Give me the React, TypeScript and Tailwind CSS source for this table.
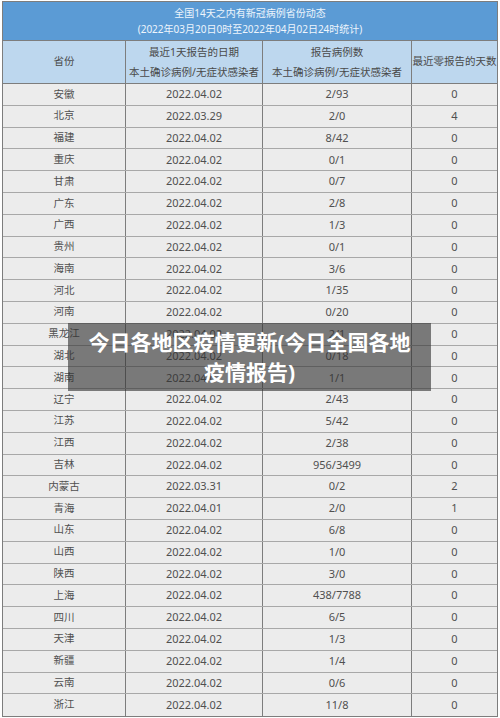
import React from "react";

const rows: [string, string, string, string][] = [
  ["安徽", "2022.04.02", "2/93", "0"],
  ["北京", "2022.03.29", "2/0", "4"],
  ["福建", "2022.04.02", "8/42", "0"],
  ["重庆", "2022.04.02", "0/1", "0"],
  ["甘肃", "2022.04.02", "0/7", "0"],
  ["广东", "2022.04.02", "2/8", "0"],
  ["广西", "2022.04.02", "1/3", "0"],
  ["贵州", "2022.04.02", "0/1", "0"],
  ["海南", "2022.04.02", "3/6", "0"],
  ["河北", "2022.04.02", "1/35", "0"],
  ["河南", "2022.04.02", "0/20", "0"],
  ["黑龙江", "2022.04.02", "2/1", "0"],
  ["湖北", "2022.04.02", "0/18", "0"],
  ["湖南", "2022.04.02", "1/1", "0"],
  ["辽宁", "2022.04.02", "2/43", "0"],
  ["江苏", "2022.04.02", "5/42", "0"],
  ["江西", "2022.04.02", "2/38", "0"],
  ["吉林", "2022.04.02", "956/3499", "0"],
  ["内蒙古", "2022.03.31", "0/2", "2"],
  ["青海", "2022.04.01", "2/0", "1"],
  ["山东", "2022.04.02", "6/8", "0"],
  ["山西", "2022.04.02", "1/0", "0"],
  ["陕西", "2022.04.02", "3/0", "0"],
  ["上海", "2022.04.02", "438/7788", "0"],
  ["四川", "2022.04.02", "6/5", "0"],
  ["天津", "2022.04.02", "1/3", "0"],
  ["新疆", "2022.04.02", "1/4", "0"],
  ["云南", "2022.04.02", "0/6", "0"],
  ["浙江", "2022.04.02", "11/8", "0"],
];

const font = { fontFamily: '"Noto Sans", "Noto Sans CJK SC", sans-serif' };

export default function App() {
  return (
    <div className="relative w-[500px] h-[718px] bg-white overflow-hidden" style={font}>
      <div className="mx-[2px] mt-[1px] border border-[#7d7d7d]">
        {/* title band */}
        <div className="h-[39px] bg-[#5b9bd5] flex flex-col items-center justify-center text-[#eef5fc] text-[10px] leading-[16px] border-b border-[#7d7d7d]">
          <div>全国14天之内有新冠病例省份动态</div>
          <div>(2022年03月20日0时至2022年04月02日24时统计)</div>
        </div>
        {/* column header */}
        <div className="grid grid-cols-[123px_137px_149px_85px] h-[43px] bg-[#bdd7ee] text-[#4a4a4a] text-[10.5px] border-b border-[#7d7d7d]">
          <div className="flex items-center justify-center border-r border-[#7d7d7d]">省份</div>
          <div className="flex flex-col items-center justify-center leading-[20px] border-r border-[#7d7d7d]">
            <div>最近1天报告的日期</div>
            <div>本土确诊病例/无症状感染者</div>
          </div>
          <div className="flex flex-col items-center justify-center leading-[20px] border-r border-[#7d7d7d]">
            <div>报告病例数</div>
            <div>本土确诊病例/无症状感染者</div>
          </div>
          <div className="flex items-center justify-center">最近零报告的天数</div>
        </div>
        {/* body */}
        <div className="bg-[#ececec] text-[#505050] text-[11px]">
          {rows.map((r, i) => (
            <div
              key={r[0]}
              className={
                "grid grid-cols-[123px_137px_149px_85px] h-[21.8px] " +
                (i < rows.length - 1 ? "border-b border-[#a8a8a8]" : "")
              }
            >
              <div className="flex items-center justify-center border-r border-[#7d7d7d] text-[10.5px]">{r[0]}</div>
              <div className="flex items-center justify-center border-r border-[#7d7d7d]">{r[1]}</div>
              <div className="flex items-center justify-center border-r border-[#7d7d7d]">{r[2]}</div>
              <div className="flex items-center justify-center">{r[3]}</div>
            </div>
          ))}
        </div>
      </div>

      {/* overlay caption */}
      <div className="absolute left-[68px] top-[323px] w-[363px] h-[68px] bg-[rgba(50,50,50,0.62)] flex flex-col items-center justify-center text-white font-bold text-[21px] leading-[30px]">
        <div>今日各地区疫情更新(今日全国各地</div>
        <div>疫情报告)</div>
      </div>
    </div>
  );
}
